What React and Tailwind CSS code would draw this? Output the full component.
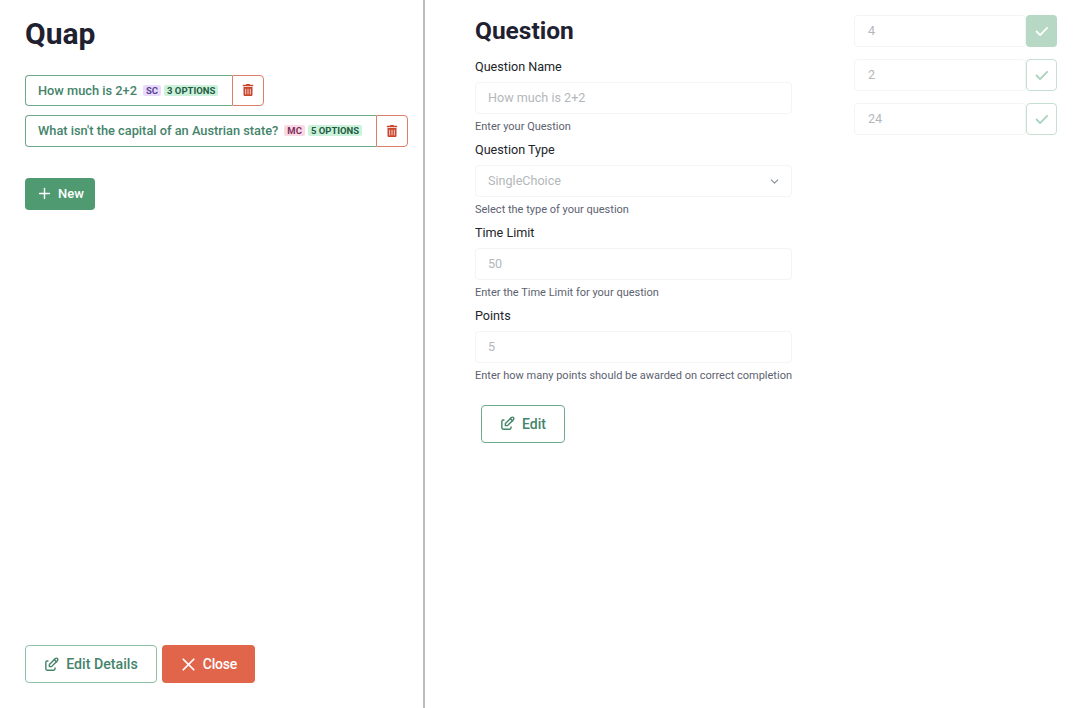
import React from 'react'
import { TbEdit, TbPlus, TbX, TbCheck, TbChevronDown } from 'react-icons/tb'
import { FaTrashAlt } from 'react-icons/fa'

const questions = [
  { name: 'How much is 2+2', type: 'SC', options: '3 OPTIONS', typeStyle: 'bg-[#e8dcfa] text-[#5b3f94]' },
  { name: "What isn't the capital of an Austrian state?", type: 'MC', options: '5 OPTIONS', typeStyle: 'bg-[#f9d9e6] text-[#7f2f58]' },
]

const fields = [
  { label: 'Question Name', value: 'How much is 2+2', hint: 'Enter your Question' },
  { label: 'Question Type', value: 'SingleChoice', hint: 'Select the type of your question', select: true },
  { label: 'Time Limit', value: '50', hint: 'Enter the Time Limit for your question' },
  { label: 'Points', value: '5', hint: 'Enter how many points should be awarded on correct completion' },
]

const answers = [
  { value: '4', correct: true },
  { value: '2', correct: false },
  { value: '24', correct: false },
]

function QuestionRow({ question }) {
  return (
    <div className="flex h-[31.5px] w-fit">
      <button className="flex items-center gap-[6px] whitespace-nowrap rounded-l-[4px] border border-r-0 border-[#6fa98b] pl-[12px] pr-[14px] text-[12.8px] font-medium text-[#44846a]">
        <span>{question.name}</span>
        <span className="flex items-center gap-[3px]">
          <span className={`rounded-[2px] px-[3px] text-[9.5px] leading-[11px] font-bold ${question.typeStyle}`}>{question.type}</span>
          <span className="rounded-[2px] bg-[#cdf2dc] px-[3px] text-[9.5px] leading-[11px] font-bold text-[#235b42]">{question.options}</span>
        </span>
      </button>
      <button className="flex w-[32px] items-center justify-center rounded-r-[4px] border border-[#d9806b] text-[#c9452c]">
        <FaTrashAlt size={12} />
      </button>
    </div>
  )
}

function Field({ field }) {
  return (
    <div className="mb-[4px]">
      <label className="block pt-[1px] text-[12.6px] leading-[20px] text-[#212529]">{field.label}</label>
      <div className="mt-[5px] flex h-[32px] items-center justify-between rounded-[4px] border border-[#f3f4f6] pl-[12px] pr-[10px] pt-[1px] text-[12.6px] text-[#b4b7bb]">
        <span>{field.value}</span>
        {field.select && <TbChevronDown size={13} className="text-[#868e96]" />}
      </div>
      <p className="mt-[5px] whitespace-nowrap text-[11px] leading-[16px] text-[#5c6270]">{field.hint}</p>
    </div>
  )
}

export default function App() {
  return (
    <div className="flex h-[708px] bg-white font-['Roboto','Noto_Sans',sans-serif]">
      <aside className="flex w-[425px] shrink-0 flex-col border-r-2 border-[#bdbdbd] px-[25px] pt-[16px] pb-[25px]">
        <h1 className="text-[30px] leading-[36px] font-bold text-[#1f2130]">Quap</h1>
        <div className="mt-[22.5px] flex flex-col gap-[9px]">
          {questions.map((q) => (
            <QuestionRow key={q.name} question={q} />
          ))}
        </div>
        <button className="mt-[31.5px] flex h-[31.5px] w-[70px] items-center justify-center gap-[5px] rounded-[4px] bg-[#4f9a70] text-[13px] font-medium text-white">
          <TbPlus size={17} />
          New
        </button>
        <div className="mt-auto flex gap-[5px]">
          <button className="flex h-[38px] w-[132px] items-center justify-center gap-[6px] rounded-[4px] border border-[#8fbfa5] pt-[1px] pr-[1px] text-[14.2px] font-medium text-[#44846a]">
            <TbEdit size={17} />
            Edit Details
          </button>
          <button className="flex h-[38px] w-[93px] items-center justify-center gap-[4px] rounded-[4px] bg-[#e0654a] pt-[1px] pr-[2px] text-[14px] font-medium tracking-[-0.2px] text-white">
            <TbX size={21} />
            Close
          </button>
        </div>
      </aside>
      <main className="flex flex-1 pl-[50px] pt-[12px]">
        <div className="w-[317px]">
          <h2 className="mb-[6px] text-[24.5px] leading-[38px] font-bold text-[#1f2130]">Question</h2>
          {fields.map((f) => (
            <Field key={f.label} field={f} />
          ))}
          <button className="mt-[21px] ml-[6px] flex h-[38px] w-[84px] items-center justify-center gap-[6px] rounded-[4px] border border-[#6fa98b] pt-[1px] pr-[1px] text-[14px] font-medium text-[#44846a]">
            <TbEdit size={17} className="-mt-[2px]" />
            Edit
          </button>
        </div>
        <div className="mt-[3px] ml-[62px] flex w-[203px] flex-col gap-[12px]">
          {answers.map((a) => (
            <div key={a.value} className="flex h-[32px]">
              <div className="flex flex-1 items-center rounded-[4px] border border-[#f3f4f6] pl-[13px] pt-[1px] text-[12.6px] text-[#b4b7bb]">{a.value}</div>
              {a.correct ? (
                <div className="flex w-[31px] items-center justify-center rounded-[4px] bg-[#b6d8c5] text-white">
                  <TbCheck size={17} strokeWidth={2.5} />
                </div>
              ) : (
                <div className="flex w-[31px] items-center justify-center rounded-[4px] border border-[#c5e0d1] text-[#a9d1bb]">
                  <TbCheck size={17} strokeWidth={2.5} />
                </div>
              )}
            </div>
          ))}
        </div>
      </main>
    </div>
  )
}
